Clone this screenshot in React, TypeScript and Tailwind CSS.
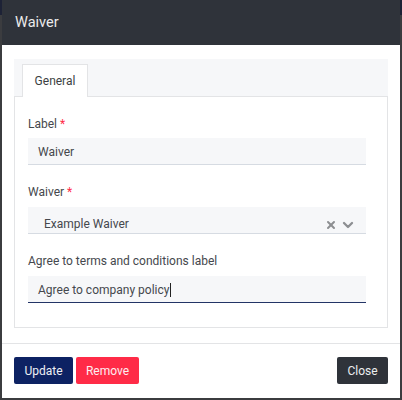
import { X, ChevronDown } from "lucide-react";

export default function App() {
  return (
    <main
      className="w-[402px] h-[400px] px-[2px] pb-[2px] bg-[linear-gradient(#1d2236_0_15px,#3b3c3f_15px)] text-[#45484d]"
      style={{ fontFamily: "Roboto, 'Noto Sans', sans-serif" }}
    >
      <div className="h-[398px] bg-white flex flex-col">
        {/* Header */}
        <div className="h-[45px] bg-[#2f333a] flex items-center px-[13px] shrink-0">
          <h1 className="text-[14.5px] text-[#ececec] font-normal">Waiver</h1>
        </div>

        {/* Body */}
        <div className="px-[12px] pt-[14px] pb-[15px]">
          <div className="h-[269px] flex flex-col">
            {/* Tabs */}
            <div className="h-[38px] bg-[#f6f7f9] border-b border-[#e3e4e6] flex items-end px-[8px] shrink-0">
              <div className="h-[33px] w-[66px] -mb-px bg-white border border-b-0 border-[#e3e4e6] flex items-center justify-center text-[12px] text-[#3c3f43]">
                General
              </div>
            </div>

            {/* Panel */}
            <div className="flex-1 border border-t-0 border-[#e3e4e6] pl-[13px] pr-[21px] pt-[17px]">
              <label className="block h-[20px] leading-[20px] text-[12px] mb-[4px]">
                Label <span className="text-[#ff2b47]">*</span>
              </label>
              <div className="h-[27px] bg-[#f6f7f9] border-b border-[#d6dbe2] flex items-center pl-[10px] pt-px text-[12px]">
                Waiver
              </div>

              <label className="block h-[20px] leading-[20px] text-[12px] mt-[17px] mb-[5px]">
                Waiver <span className="text-[#ff2b47]">*</span>
              </label>
              <div className="h-[27px] bg-[#f6f7f9] border-b border-[#d6dbe2] flex items-start pl-[16px] pr-[10px] pt-[8px] text-[12px]">
                <span className="flex-1 leading-[18px]">Example Waiver</span>
                <div className="flex items-center gap-[3px] pt-[2px] text-[#8d8f92]">
                  <X size={12} strokeWidth={4} />
                  <ChevronDown size={16} strokeWidth={3.5} />
                </div>
              </div>

              <label className="block h-[20px] leading-[20px] text-[12px] mt-[17px] mb-[5px]">
                Agree to terms and conditions label
              </label>
              <div className="h-[27px] bg-[#f6f7f9] border-b border-[#233466] flex items-center pl-[10px] pt-px text-[12px]">
                Agree to company policy
                <span className="inline-block w-px h-[14px] bg-[#222] ml-px" />
              </div>
            </div>
          </div>
        </div>

        {/* Footer */}
        <div className="border-t border-[#e3e4e6] px-[12px] pt-[13px] flex items-start">
          <button className="h-[27px] w-[59px] rounded-[2px] bg-[#0d2263] text-[#eef0f5] text-[12px]">
            Update
          </button>
          <button className="h-[27px] w-[63px] ml-[3px] rounded-[2px] bg-[#ff2b47] text-[#fdeef0] text-[12px]">
            Remove
          </button>
          <button className="h-[27px] w-[51px] ml-auto rounded-[2px] bg-[#2f333a] text-[#eceeef] text-[12px]">
            Close
          </button>
        </div>
      </div>
    </main>
  );
}
